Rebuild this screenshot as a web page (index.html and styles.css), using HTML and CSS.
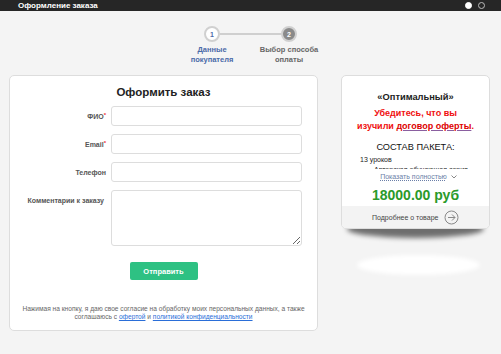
FILE: index.html
```html
<html>
<head>
<meta charset="utf-8">
<link rel="stylesheet" href="styles.css">
</head>
<body>
<div class="topbar">
  <span class="topbar-title">Оформление заказа</span>
  <span class="dots"><i class="dot dot-on"></i><i class="dot"></i></span>
</div>

<div class="steps">
  <div class="steps-track">
    <span class="step-circle step-done">1</span>
    <span class="step-line"></span>
    <span class="step-circle step-current">2</span>
  </div>
  <div class="steps-labels">
    <span class="step-label step-label-done">Данные<br>покупателя</span>
    <span class="step-label">Выбор способа<br>оплаты</span>
  </div>
</div>

<div class="main">
  <form class="order-card">
    <h1>Оформить заказ</h1>
    <div class="field-row">
      <label for="fio">ФИО<sup>*</sup></label>
      <input type="text" id="fio">
    </div>
    <div class="field-row">
      <label for="email">Email<sup>*</sup></label>
      <input type="text" id="email">
    </div>
    <div class="field-row">
      <label for="phone">Телефон</label>
      <input type="text" id="phone">
    </div>
    <div class="field-row field-row-top">
      <label for="comment">Комментарии к заказу</label>
      <textarea id="comment"></textarea>
    </div>
    <button type="button" class="button-send">Отправить</button>
    <p class="consent">Нажимая на кнопку, я даю свое согласие на обработку моих персональных данных, а также соглашаюсь с <a href="#">офертой</a> и <a href="#">политикой конфиденциальности</a></p>
  </form>

  <div class="product">
    <div class="product-card">
      <div class="product-title">«Оптимальный»</div>
      <div class="product-warning">Убедитесь, что вы<br>изучили <a href="#">договор оферты</a>.</div>
      <div class="product-heading">СОСТАВ ПАКЕТА:</div>
      <div class="product-list">
        <div>13 уроков</div>
        <div class="product-list-more">Авторская обучающая серия</div>
      </div>
      <div class="product-more">
        <a href="#">Показать полностью</a>
        <svg width="6" height="4" viewBox="0 0 6 4"><path d="M0.5 0.5l2.5 2.5 2.5-2.5" fill="none" stroke="#888" stroke-width="1"/></svg>
      </div>
      <div class="product-price">18000.00 руб</div>
      <div class="product-footer">
        <span>Подробнее о товаре</span>
        <svg width="15" height="15" viewBox="0 0 15 15">
          <circle cx="7.5" cy="7.5" r="6.5" fill="none" stroke="#888" stroke-width="1"/>
          <path d="M4 7.5h7M8 4.5l3 3-3 3" fill="none" stroke="#888" stroke-width="1"/>
        </svg>
      </div>
    </div>
    <div class="product-glow"></div>
  </div>
</div>
</body>
</html>
```

FILE: styles.css
```css
* {
  box-sizing: border-box;
}

body {
  margin: 0;
  background: #f4f4f4;
  font-family: "Liberation Sans", Arial, sans-serif;
  color: #333;
}

.topbar {
  height: 11px;
  background: #262626;
  display: flex;
  align-items: center;
  justify-content: space-between;
  padding: 0 16px 0 18px;
}

.topbar-title {
  color: #fff;
  font-size: 8px;
  font-weight: bold;
}

.dots {
  display: flex;
  gap: 6px;
}

.dot {
  display: block;
  width: 7px;
  height: 7px;
  border-radius: 50%;
  border: 1px solid #bbb;
}

.dot-on {
  background: #fff;
  border-color: #fff;
}

.steps {
  margin-top: 15px;
}

.steps-track {
  display: flex;
  justify-content: center;
  align-items: center;
}

.step-circle {
  width: 16px;
  height: 16px;
  border-radius: 50%;
  border: 2px solid #d0d0d0;
  font-size: 7px;
  font-weight: bold;
  display: flex;
  align-items: center;
  justify-content: center;
}

.step-done {
  background: #fff;
  color: #4a6aa8;
}

.step-current {
  background: #8a8a8a;
  color: #fff;
}

.step-line {
  width: 61px;
  height: 2px;
  background: #cfcfcf;
}

.steps-labels {
  display: flex;
  justify-content: center;
  margin-top: 3px;
}

.step-label {
  width: 77px;
  text-align: center;
  font-size: 7.5px;
  font-weight: bold;
  line-height: 10px;
  color: #666;
}

.step-label-done {
  color: #4a6aa8;
}

.main {
  display: flex;
  align-items: flex-start;
  gap: 23px;
  margin: 10px 0 0 9px;
}

.order-card {
  width: 309px;
  margin: 0;
  background: #fff;
  border: 1px solid #ddd;
  border-radius: 5px;
  padding: 8px 0 9px;
}

h1 {
  margin: 0 0 6px;
  text-align: center;
  font-size: 11.5px;
  line-height: 16px;
  color: #222;
}

.field-row {
  display: flex;
  align-items: center;
  margin-bottom: 8px;
}

.field-row-top {
  align-items: flex-start;
  margin-bottom: 0;
}

.field-row label {
  width: 96px;
  margin-right: 5px;
  text-align: right;
  font-size: 7px;
  font-weight: bold;
  color: #555;
}

.field-row-top label {
  padding: 7px 2px 0 0;
}

.field-row sup {
  color: #e33;
  font-size: 6px;
  vertical-align: 2px;
}

.field-row input,
.field-row textarea {
  width: 191px;
  height: 20px;
  border: 1px solid #ddd;
  border-radius: 3px;
  margin: 0;
  font-size: 8px;
}

.field-row textarea {
  height: 56px;
}

.button-send {
  display: block;
  margin: 16px auto 0;
  width: 68px;
  height: 18px;
  border: 0;
  border-radius: 2px;
  background: #2ec183;
  color: #fff;
  font-family: "Liberation Sans", Arial, sans-serif;
  font-size: 7.5px;
  font-weight: bold;
}

.consent {
  margin: 25px 10px 0;
  text-align: center;
  font-size: 6.6px;
  line-height: 8px;
  color: #666;
}

.consent a {
  color: #2a6ed8;
}

.product {
  width: 149px;
  position: relative;
}

.product-card {
  position: relative;
  z-index: 1;
  background: #fff;
  border: 1px solid #ddd;
  border-radius: 5px;
  text-align: center;
  padding-top: 15px;
  overflow: hidden;
}

.product-title {
  font-size: 9.3px;
  font-weight: bold;
  line-height: 12px;
  color: #222;
}

.product-warning {
  margin-top: 4px;
  font-size: 9px;
  font-weight: bold;
  line-height: 13px;
  color: #f01010;
}

.product-warning a {
  color: #d00;
  text-decoration-color: #8a5fa0;
}

.product-heading {
  margin-top: 8px;
  font-size: 9.2px;
  line-height: 13px;
  color: #111;
}

.product-list {
  height: 14px;
  margin-top: 1px;
  overflow: hidden;
  text-align: left;
  padding-left: 18px;
  font-size: 7px;
  line-height: 9px;
  color: #222;
}

.product-list-more {
  padding-left: 14px;
  margin-top: 1px;
}

.product-more {
  margin-top: 3px;
  font-size: 7px;
  line-height: 9px;
  display: flex;
  justify-content: center;
  align-items: center;
  gap: 4px;
  padding-left: 6px;
}

.product-more a {
  color: #6b7fa8;
  text-decoration: underline dotted;
}

.product-price {
  margin-top: 5px;
  font-size: 14px;
  font-weight: bold;
  line-height: 18px;
  color: #2a9a2a;
}

.product-footer {
  margin-top: 2px;
  height: 22px;
  background: #f3f3f3;
  display: flex;
  align-items: center;
  justify-content: space-between;
  padding: 0 30px 0 30px;
  font-size: 7px;
  color: #444;
}

.product::after {
  content: "";
  position: absolute;
  left: 6px;
  right: 6px;
  top: calc(100% - 9px);
  height: 18px;
  border-radius: 50%;
  background: rgba(0, 0, 0, 0.55);
  filter: blur(2.5px);
}

.product-glow {
  position: absolute;
  left: 16px;
  right: 10px;
  top: calc(100% + 26px);
  height: 20px;
  border-radius: 50%;
  background: #fff;
  filter: blur(2px);
}
```
